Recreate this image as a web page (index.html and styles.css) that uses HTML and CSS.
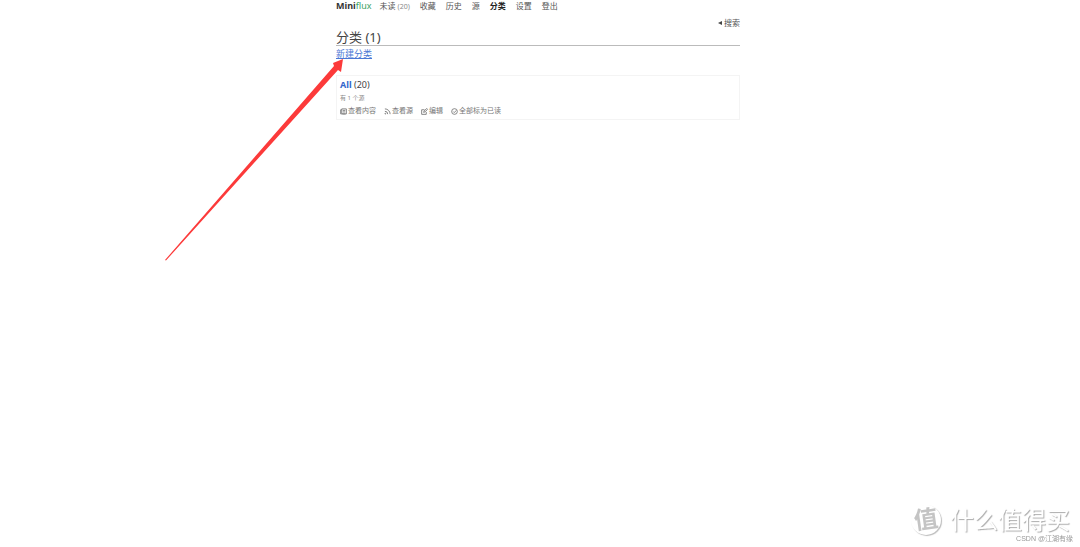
FILE: index.html
```html
<!DOCTYPE html>
<html lang="zh-CN">
<head>
    <meta charset="UTF-8">
    <meta name="viewport" content="width=device-width, initial-scale=1.0">
    <title>分类 (1) - Miniflux</title>
    <link rel="stylesheet" href="styles.css">
</head>
<body>
    <div class="container">
        <header class="header">
            <nav class="nav">
                <a class="logo" href="#">Mini<span>flux</span></a>
                <a href="#">未读 <span class="counter">(20)</span></a>
                <a href="#">收藏</a>
                <a href="#">历史</a>
                <a href="#">源</a>
                <a class="active" href="#">分类</a>
                <a href="#">设置</a>
                <a href="#">登出</a>
            </nav>
            <div class="search">
                <a href="#"><svg viewBox="0 0 5 5"><path d="M5 0v5L0 2.500z"/></svg>搜索</a>
            </div>
        </header>

        <main>
            <section class="page-header">
                <h1>分类 (1)</h1>
                <a href="#">新建分类</a>
            </section>

            <article class="item">
                <h2><a href="#">All</a> (20)</h2>
                <p class="meta">有 1 个源</p>
                <ul class="actions">
                    <li><a href="#">
                        <svg class="icon" viewBox="0 0 16 16"><path d="M4 4H1.500v9.500h11M4 2h10.500v11.500H5.500L4 12zM6.500 5.500h5.500M6.500 9h5.500"/></svg>
                        查看内容
                    </a></li>
                    <li><a href="#">
                        <svg class="icon" viewBox="0 0 16 16"><path d="M2 2a12 12 0 0 1 12 12M2 7.500a6.500 6.500 0 0 1 6.500 6.500"/><circle cx="3" cy="13" r="1"/></svg>
                        查看源
                    </a></li>
                    <li><a href="#">
                        <svg class="icon" viewBox="0 0 16 16"><path d="M8 4H1.500v10.500h10.500V9M6 10l1-3 6-6 2 2-6 6z"/></svg>
                        编辑
                    </a></li>
                    <li><a href="#">
                        <svg class="icon" viewBox="0 0 16 16"><circle cx="8" cy="8" r="6.500"/><path d="M5 8l2.500 2.500L12 5.500"/></svg>
                        全部标为已读
                    </a></li>
                </ul>
            </article>
        </main>
    </div>

    <!-- arrow pointing at the "new category" link -->
    <svg class="arrow" viewBox="0 0 180 202">
        <path d="M0 201L169 7L168 4L178 0L176 13L173 11L1 201.500z"/>
    </svg>

    <footer class="watermark">
        <div class="brand">
            <span class="badge"><span>值</span></span>
            <span class="name">什么值得买</span>
        </div>
        <div class="credit">CSDN @江湖有缘</div>
    </footer>
</body>
</html>
```

FILE: styles.css
```css
* {
    box-sizing: border-box;
}
body {
    margin: 0;
    padding-right: 4px;
    background: #fff;
    color: #555;
    font-family: "Noto Sans", "Noto Sans CJK SC", sans-serif;
    font-size: 8px;
    line-height: 12px;
}
a {
    color: inherit;
    text-decoration: none;
}
.container {
    max-width: 404px;
    margin: 0 auto;
}
.nav {
    display: flex;
    gap: 10px;
}
.nav .logo {
    margin-right: -2px;
    color: #333;
    font-size: 9px;
    font-weight: bold;
}
.logo span {
    color: #3aa263;
    font-weight: normal;
}
.nav .active {
    color: #222;
    font-weight: bold;
}
.counter {
    color: #888;
    font-size: 7px;
}
.search {
    margin-top: 4px;
    text-align: right;
}
.search svg {
    width: 4px;
    height: 4px;
    margin-right: 2px;
    vertical-align: 1px;
    fill: #444;
}
.page-header h1 {
    margin: 0;
    border-bottom: 1px solid #bbb;
    color: #444;
    font-size: 13px;
    font-weight: normal;
    line-height: 16px;
}
.page-header a {
    display: inline-block;
    color: #4a77d4;
    font-size: 9px;
    line-height: 16px;
    text-decoration: underline;
}
.item {
    margin-top: 13px;
    padding: 3px;
    border: 1px solid #f4f4f4;
}
.item h2 {
    margin: 0;
    color: #444;
    font-size: 9px;
    font-weight: normal;
    line-height: 12px;
}
.item h2 a {
    color: #3366cc;
    font-weight: bold;
}
.meta {
    margin: 0;
    color: #888;
    font-size: 6px;
    line-height: 14px;
}
.actions {
    display: flex;
    gap: 8px;
    margin: 0;
    padding: 1px 0 0;
    color: #777;
    font-size: 7px;
    line-height: 10px;
    list-style: none;
}
.actions a {
    display: flex;
    align-items: center;
    gap: 1px;
}
.icon {
    width: 7px;
    height: 7px;
    fill: none;
    stroke: #777;
    stroke-width: 2;
}
.arrow {
    position: absolute;
    top: 59px;
    left: calc(50% - 375px);
    width: 180px;
    height: 202px;
    fill: #fc3a3a;
}
.watermark {
    position: fixed;
    right: 7px;
    bottom: 4px;
}
.brand {
    display: flex;
    align-items: center;
    gap: 9px;
    margin-right: 3px;
    color: #fff;
    font-size: 24px;
    line-height: 30px;
    text-shadow: 1px 1px 1px #aaa;
}
.badge {
    width: 30px;
    height: 30px;
    border-radius: 50%;
    box-shadow: 1px 1px 1px #bbb;
    color: #c4c4c4;
    font-weight: bold;
    line-height: 28px;
    text-align: center;
    text-shadow: none;
}
.badge span {
    display: block;
    transform: rotate(-8deg);
}
.credit {
    color: #999;
    font-family: "Liberation Sans", "Noto Sans CJK SC", sans-serif;
    font-size: 7px;
    line-height: 8px;
    text-align: right;
}
```
